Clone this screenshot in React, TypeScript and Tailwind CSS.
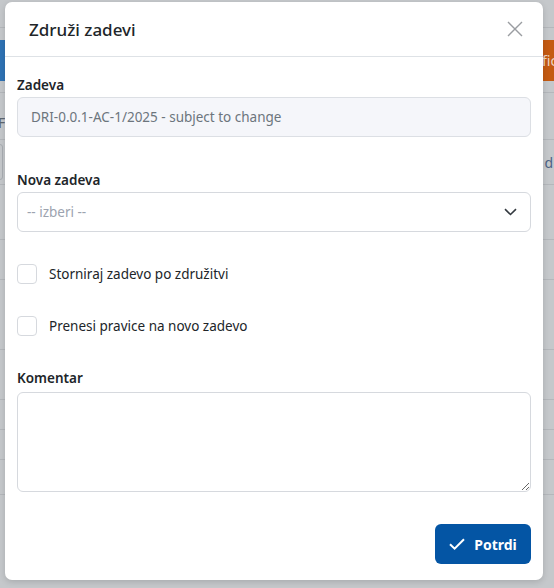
import React from "react";

const font = { fontFamily: '"Noto Sans", "Open Sans", Arial, sans-serif' };

function BgRow({ h, children }: { h: number; children?: React.ReactNode }) {
  return (
    <div className="border-b border-[#b4b7bb] flex justify-between items-center" style={{ height: h }}>
      {children}
    </div>
  );
}

export default function App() {
  return (
    <div className="relative w-[554px] h-[588px] overflow-hidden bg-[#c5c8cb]" style={font}>
      {/* dimmed page behind */}
      <div className="flex flex-col">
        <BgRow h={28} />
        <div className="h-[12px]" />
        <div className="h-[41px] flex justify-between">
          <div className="w-[6px] bg-[#2f73b5]" />
          <div className="w-[34px] bg-[#c45a12] text-[#ecd6c6] text-[14px] flex items-center pl-[22px] whitespace-nowrap overflow-hidden">fic</div>
        </div>
        <BgRow h={12} />
        <BgRow h={47}>
          <span className="text-[#5d6670] text-[14px] -ml-[2px] mt-[12px]">F</span>
        </BgRow>
        <BgRow h={45}>
          <div className="w-[4px] h-[36px] border border-[#a9adb2] rounded-r-[3px] -ml-[1px]" />
          <span className="text-[#4d6385] text-[14px] pr-[1px]">d</span>
        </BgRow>
        <BgRow h={55} />
        <BgRow h={40} />
        <BgRow h={70} />
        <BgRow h={50} />
        <BgRow h={30} />
        <BgRow h={30} />
        <BgRow h={35} />
      </div>

      {/* modal */}
      <div className="absolute left-[5px] top-[2px] w-[538px] h-[578px] bg-white rounded-[7px] flex flex-col shadow-[0_2px_6px_rgba(0,0,0,0.15)]">
        <div className="h-[55px] flex items-center justify-between pl-[24px] pr-[20px] border-b border-[#dee2e6]">
          <h1 className="text-[17px] font-medium text-[#212529] leading-none">Združi zadevi</h1>
          <svg width="16" height="16" viewBox="0 0 16 16">
            <path d="M1 1L15 15M15 1L1 15" stroke="#9a9da1" strokeWidth="1.4" />
          </svg>
        </div>
        <div className="flex flex-col px-[12px] pt-[18px] text-[13.5px]">
          <label className="font-semibold text-[#212529] leading-[20px]">Zadeva</label>
          <div className="mt-[2px] h-[40px] rounded-[6px] border border-[#dcdfe4] bg-[#f5f6fa] flex items-center px-[13px] text-[#6c757d]">
            DRI-0.0.1-AC-1/2025 - subject to change
          </div>

          <label className="mt-[33px] font-semibold text-[#212529] leading-[20px]">Nova zadeva</label>
          <div className="mt-[2px] h-[40px] rounded-[6px] border border-[#d6d9de] bg-white flex items-center justify-between pl-[9px] pr-[13px] text-[#9ca3af]">
            <span>-- izberi --</span>
            <svg width="13" height="8" viewBox="0 0 13 8">
              <path d="M1 1.2L6.5 6.5L12 1.2" fill="none" stroke="#343a40" strokeWidth="1.6" />
            </svg>
          </div>

          <div className="mt-[32px] flex items-center gap-[12px] h-[20px]">
            <div className="w-[20px] h-[20px] rounded-[4px] border border-[#d6d9de] bg-white" />
            <span className="text-[#212529]">Storniraj zadevo po združitvi</span>
          </div>
          <div className="mt-[32px] flex items-center gap-[12px] h-[20px]">
            <div className="w-[20px] h-[20px] rounded-[4px] border border-[#d6d9de] bg-white" />
            <span className="text-[#212529]">Prenesi pravice na novo zadevo</span>
          </div>

          <label className="mt-[32px] font-semibold text-[#212529] leading-[20px]">Komentar</label>
          <textarea className="mt-[4px] h-[100px] rounded-[6px] border border-[#d6d9de] bg-white resize-y outline-none" />

          <div className="flex justify-end mt-[32px]">
            <button className="w-[96px] h-[40px] rounded-[6px] bg-[#0455a4] text-white text-[14px] font-bold flex items-center justify-center gap-[9px]">
              <svg width="16" height="12" viewBox="0 0 16 12">
                <path d="M1 6.2L5.6 10.6L15 1.2" fill="none" stroke="white" strokeWidth="2" />
              </svg>
              <span>Potrdi</span>
            </button>
          </div>
        </div>
      </div>
    </div>
  );
}
